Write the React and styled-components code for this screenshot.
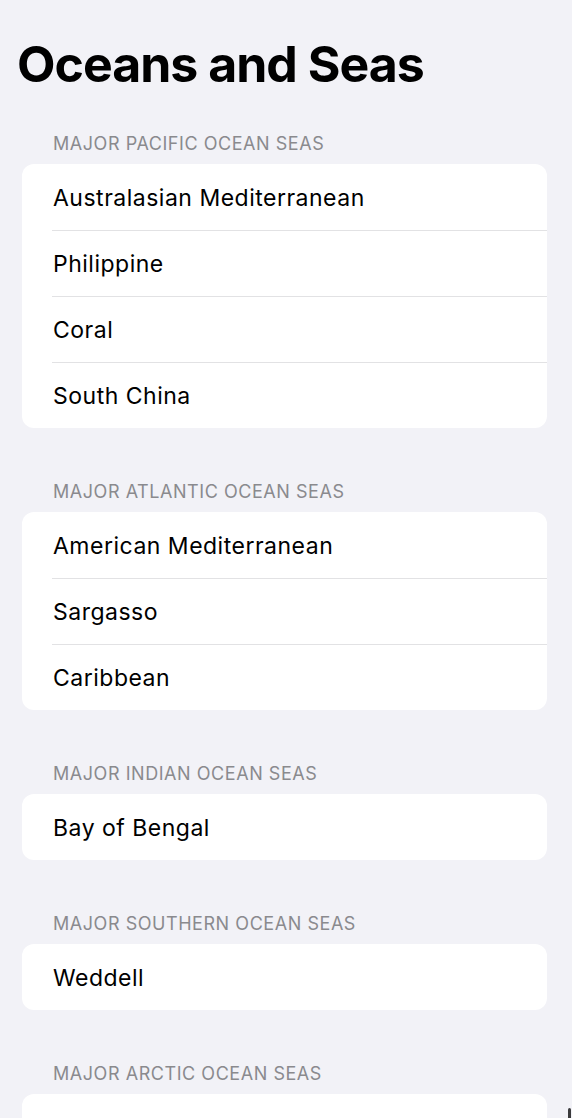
import React from 'react'
import styled, { createGlobalStyle } from 'styled-components'

const GlobalStyle = createGlobalStyle`
  html, body {
    margin: 0;
    padding: 0;
    overflow: hidden;
    background: #f2f2f7;
  }
  * {
    box-sizing: border-box;
  }
`

const Screen = styled.div`
  position: relative;
  height: 1118px;
  overflow: hidden;
  font-family: Inter, "Noto Sans", sans-serif;
  color: #000;
  background: #f2f2f7;
`

const Title = styled.h1`
  margin: 34px 0 0 17px;
  font-size: 50px;
  line-height: 60px;
  font-weight: 700;
  letter-spacing: -1px;
`

const List = styled.div`
  display: flex;
  flex-direction: column;
  gap: 52px;
  padding: 38px 25px 0 22px;
`

const Section = styled.section`
  display: flex;
  flex-direction: column;
`

const SectionHeader = styled.div`
  padding: 1px 0 9px 31px;
  font-size: 18px;
  line-height: 22px;
  letter-spacing: 0.55px;
  color: #8a8a8e;
  text-transform: uppercase;
`

const Card = styled.div`
  min-height: 66px;
  background: #fff;
  border-radius: 12px;
  overflow: hidden;
`

const Row = styled.div`
  display: flex;
  align-items: center;
  height: 66px;
  margin-left: 30px;
  padding-left: 1px;
  font-size: 23px;
  letter-spacing: 0.5px;
  border-top: 1px solid ${({ $first }) => ($first ? 'transparent' : '#e2e2e4')};
`

const ScrollIndicator = styled.div`
  position: absolute;
  right: 1px;
  bottom: -4px;
  width: 3px;
  height: 14px;
  border-radius: 2px;
  background: #3a3a3c;
`

const sections = [
  {
    title: 'Major Pacific Ocean Seas',
    seas: ['Australasian Mediterranean', 'Philippine', 'Coral', 'South China'],
  },
  {
    title: 'Major Atlantic Ocean Seas',
    seas: ['American Mediterranean', 'Sargasso', 'Caribbean'],
  },
  {
    title: 'Major Indian Ocean Seas',
    seas: ['Bay of Bengal'],
  },
  {
    title: 'Major Southern Ocean Seas',
    seas: ['Weddell'],
  },
  {
    // rows of this card sit below the fold
    title: 'Major Arctic Ocean Seas',
    seas: [],
  },
]

const App = () => (
  <Screen>
    <GlobalStyle />
    <Title>Oceans and Seas</Title>
    <List>
      {sections.map((section) => (
        <Section key={section.title}>
          <SectionHeader>{section.title}</SectionHeader>
          <Card>
            {section.seas.map((sea, i) => (
              <Row key={sea} $first={i === 0}>
                {sea}
              </Row>
            ))}
          </Card>
        </Section>
      ))}
    </List>
    <ScrollIndicator />
  </Screen>
)

export default App
